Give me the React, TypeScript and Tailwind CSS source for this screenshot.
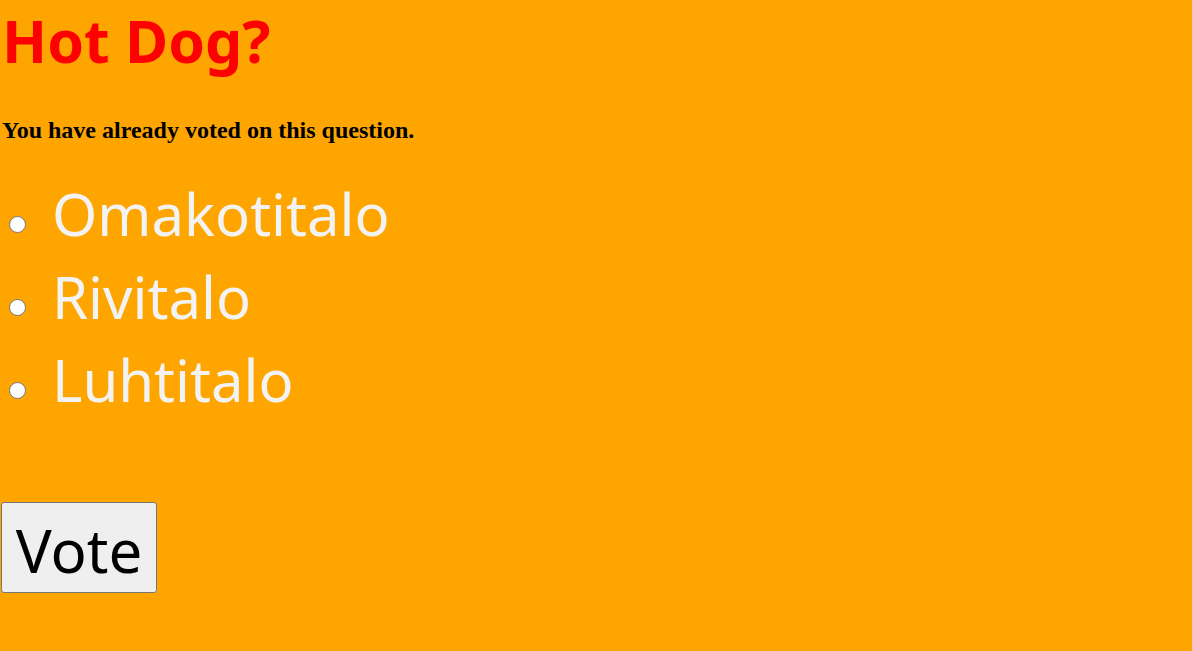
import React from "react";

const comic = { fontFamily: '"Comic Sans MS", "Noto Sans", sans-serif' };

function Radio() {
  return (
    <span className="block h-[17px] w-[17px] shrink-0 rounded-full border-[1.5px] border-[#767676] bg-white" />
  );
}

export default function App() {
  const options = ["Omakotitalo", "Rivitalo", "Luhtitalo"];
  return (
    <div className="h-[651px] w-full overflow-hidden bg-[#ffa500]">
      <h1
        className="m-0 h-[80px] pl-[2px] pt-[0px] text-[59px] font-bold leading-[80px] text-[#ff0000]"
        style={comic}
      >
        Hot Dog?
      </h1>
      <p
        className="mt-[36px] pl-[2px] text-[24px] font-bold leading-[28px] text-black"
        style={{ fontFamily: '"Liberation Serif", "Times New Roman", serif' }}
      >
        You have already voted on this question.
      </p>
      <div className="mt-[28px] flex flex-col">
        {options.map((o) => (
          <label key={o} className="flex h-[83px] items-center">
            <span className="ml-[9px] mt-[22px]">
              <Radio />
            </span>
            <span
              className="ml-[26px] text-[58px] leading-[83px] text-[#f3f3f3]"
              style={comic}
            >
              {o}
            </span>
          </label>
        ))}
      </div>
      <div className="mt-[81px] pl-[1px]">
        <button
          className="flex h-[91px] w-[156px] items-center justify-center rounded-[3px] border border-[#767676] bg-[#efefef] pt-[4px] text-[60px] leading-none text-black"
          style={comic}
        >
          Vote
        </button>
      </div>
    </div>
  );
}
